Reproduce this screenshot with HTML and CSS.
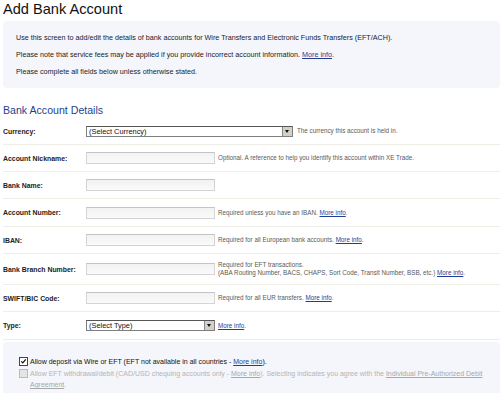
FILE: index.html
```html
<!DOCTYPE html>
<html lang="en">
<head>
  <meta charset="UTF-8" />
  <title>Add Bank Account</title>
  <link rel="stylesheet" href="styles.css">
</head>
<body>
  <h1>Add Bank Account</h1>

  <div class="intro">
    <p>Use this screen to add/edit the details of bank accounts for Wire Transfers and Electronic Funds Transfers (EFT/ACH).</p>
    <p>Please note that service fees may be applied if you provide incorrect account information. <a href="#">More info</a>.</p>
    <p>Please complete all fields below unless otherwise stated.</p>
  </div>

  <h2>Bank Account Details</h2>

  <div class="form">
    <div class="row">
      <label class="lbl">Currency:</label>
      <div class="select wide"><span>(Select Currency)</span><i class="arrow"></i></div>
      <span class="help">The currency this account is held in.</span>
    </div>
    <div class="row">
      <label class="lbl">Account Nickname:</label>
      <div class="input"></div>
      <span class="help">Optional. A reference to help you identify this account within XE Trade.</span>
    </div>
    <div class="row">
      <label class="lbl">Bank Name:</label>
      <div class="input"></div>
    </div>
    <div class="row big">
      <label class="lbl">Account Number:</label>
      <div class="input"></div>
      <span class="help">Required unless you have an IBAN. <a href="#">More info</a>.</span>
    </div>
    <div class="row">
      <label class="lbl">IBAN:</label>
      <div class="input"></div>
      <span class="help">Required for all European bank accounts. <a href="#">More info</a>.</span>
    </div>
    <div class="row tall">
      <label class="lbl">Bank Branch Number:</label>
      <div class="input"></div>
      <span class="help">Required for EFT transactions.<br>(ABA Routing Number, BACS, CHAPS, Sort Code, Transit Number, BSB, etc.) <a href="#">More info</a>.</span>
    </div>
    <div class="row">
      <label class="lbl">SWIFT/BIC Code:</label>
      <div class="input"></div>
      <span class="help">Required for all EUR transfers. <a href="#">More info</a>.</span>
    </div>
    <div class="row big">
      <label class="lbl">Type:</label>
      <div class="select"><span>(Select Type)</span><i class="arrow"></i></div>
      <span class="help"><a href="#">More info</a>.</span>
    </div>
  </div>

  <div class="options">
    <div class="check">
      <span class="box on">
        <svg width="8" height="8" viewBox="0 0 8 8"><path d="M1.5 3.8 L3.2 5.6 L6.6 1.6" fill="none" stroke="#111" stroke-width="1.4"/></svg>
      </span>
      <span class="check-text">Allow deposit via Wire or EFT (EFT not available in all countries - <a href="#">More info</a>).</span>
    </div>
    <div class="check disabled">
      <span class="box"></span>
      <span class="check-text">Allow EFT withdrawal/debit (CAD/USD chequing accounts only - <a href="#">More info</a>). Selecting indicates you agree with the <a href="#">Individual Pre-Authorized Debit</a><br><a href="#">Agreement</a>.</span>
    </div>
  </div>
</body>
</html>
```

FILE: styles.css
```css
body {
  margin: 0;
  padding: 0 0 0 3px;
  background: #fff;
  color: #222;
  font-family: "Liberation Sans", Arial, sans-serif;
  overflow: hidden;
}
a {
  color: #1f3d99;
  text-decoration: underline;
}

h1 {
  margin: 0;
  height: 21px;
  font-size: 14.6px;
  font-weight: normal;
  line-height: 18px;
  color: #111;
}

.intro {
  background: #f5f6fb;
  border-radius: 4px;
  padding: 8px 13px 11px;
  height: 48px;
}
.intro p {
  margin: 0;
  font-size: 7.2px;
  line-height: 17px;
}

h2 {
  margin: 0;
  padding: 15px 0 1px;
  font-size: 10.6px;
  font-weight: normal;
  color: #1d3f8a;
  line-height: 14px;
}

.row {
  display: flex;
  align-items: center;
  height: 26px;
  border-bottom: 1px solid #efeee6;
}
.row.big {
  height: 27px;
}
.row.tall {
  height: 30px;
}
.lbl {
  width: 83px;
  flex: none;
  font-size: 6.9px;
  font-weight: bold;
  color: #222;
}
.input {
  width: 127px;
  height: 10px;
  border: 1px solid #d4d4d4;
  border-top-color: #c4c4c4;
  background: linear-gradient(#f2f2f2, #fafafa);
  flex: none;
}
.select {
  width: 129px;
  height: 11px;
  border: 1px solid #7f7f7f;
  border-top-color: #555;
  background: #fff;
  display: flex;
  align-items: center;
  flex: none;
  box-sizing: border-box;
}
.select.wide {
  width: 207px;
}
.select span {
  flex: 1;
  font-size: 7.4px;
  padding-left: 2px;
  color: #111;
}
.arrow {
  width: 9px;
  height: 9px;
  background: #d4d0c8;
  border-left: 1px solid #888;
  position: relative;
}
.arrow::after {
  content: "";
  position: absolute;
  left: 2px;
  top: 3px;
  border-left: 2.5px solid transparent;
  border-right: 2.5px solid transparent;
  border-top: 3px solid #111;
}
.help {
  margin-left: 3px;
  font-size: 6.3px;
  line-height: 8px;
  color: #5a5a5a;
}
.wide + .help {
  margin-left: 4px;
}

.options {
  margin-top: 2px;
  background: #f5f6fb;
  padding: 14px 0 8px 16px;
  border-radius: 4px 4px 0 0;
  height: 40px;
}
.check {
  display: flex;
  align-items: flex-start;
  font-size: 7px;
  line-height: 11px;
  color: #111;
}
.check.disabled {
  color: #b4b4b4;
  margin-top: 1px;
}
.check.disabled a {
  color: #a8a8a8;
}
.box {
  width: 7px;
  height: 7px;
  border: 1px solid #444;
  background: #fff;
  margin: 1px 2px 0 0;
  flex: none;
  display: flex;
  align-items: center;
  justify-content: center;
}
.box svg {
  width: 7px;
  height: 7px;
}
.disabled .box {
  border-color: #bbb;
  background: #e4e4e4;
}
.check-text {
  flex: 1;
  padding-right: 2px;
}
```
